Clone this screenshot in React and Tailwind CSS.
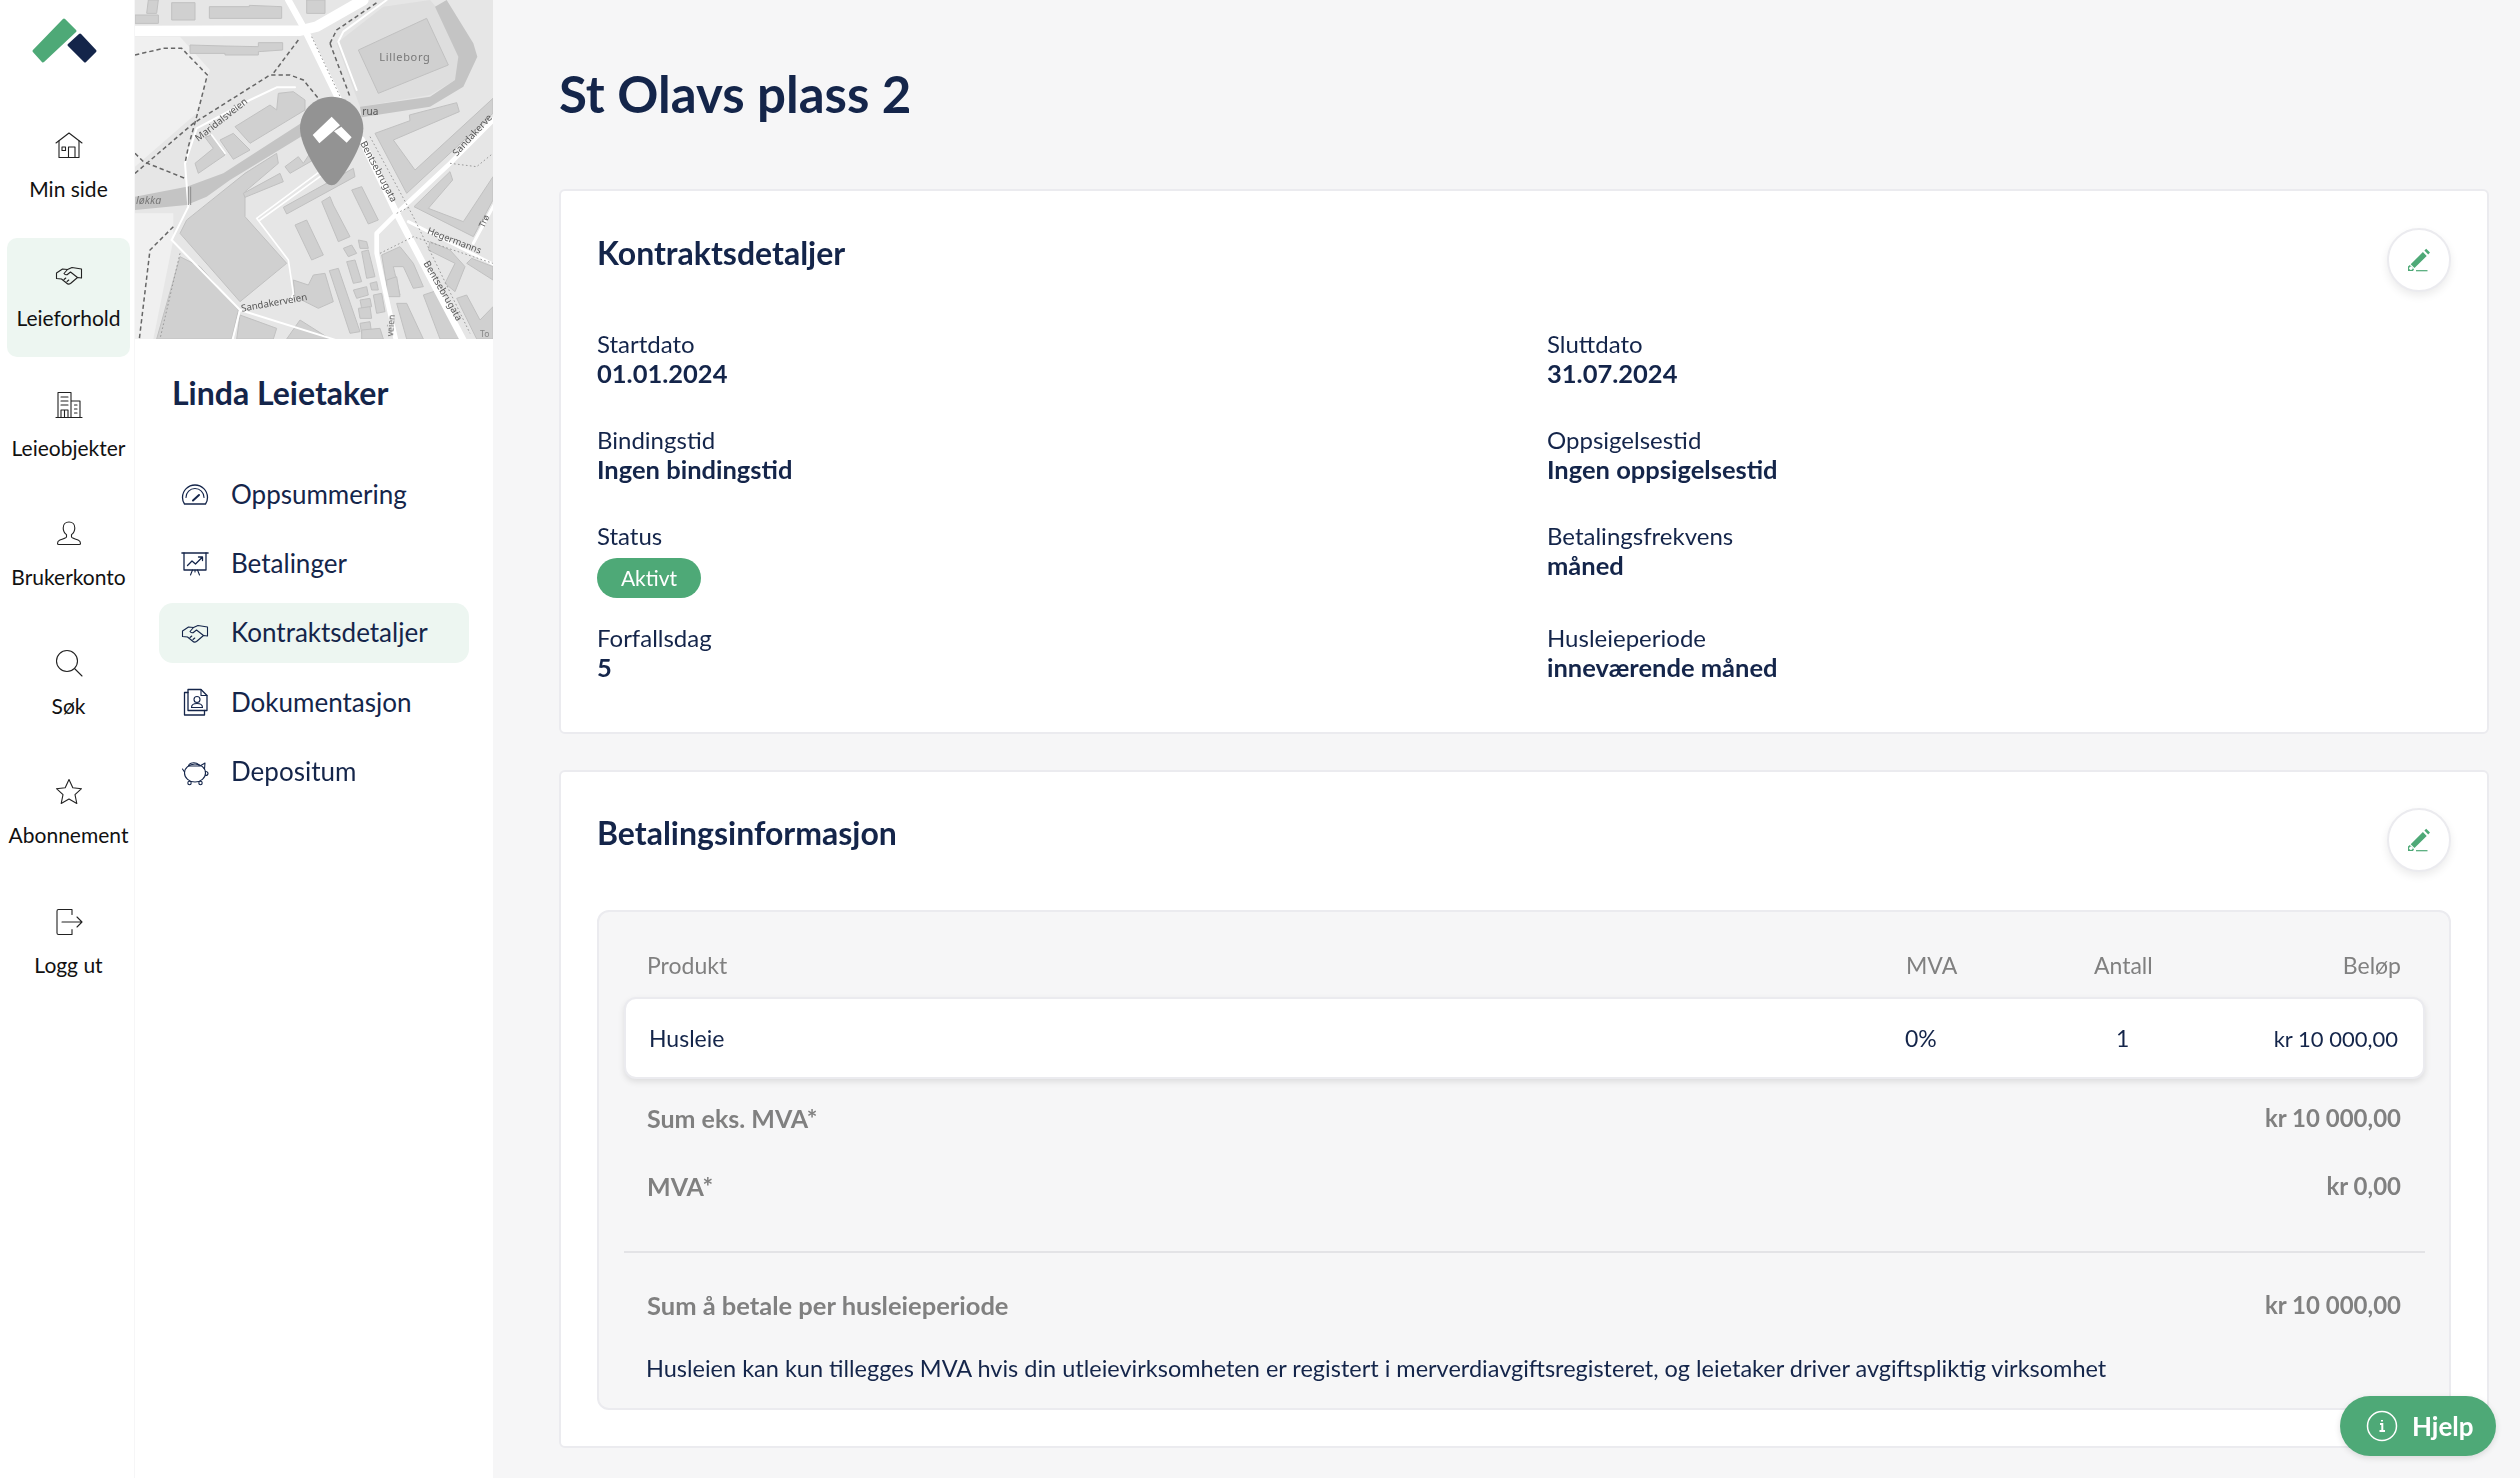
import React from "react";

const line = { fill: "none", stroke: "currentColor", strokeWidth: 1.1, strokeLinecap: "round", strokeLinejoin: "round" };

const Ico = ({ children, size = 28, className = "" }) => (
  <svg width={size} height={size} viewBox="0 0 28 28" className={className} {...line}>
    {children}
  </svg>
);

const HomeIcon = () => (
  <Ico>
    <path d="M1 11 14 1 27 11" />
    <path d="M4 9v16.500h20V9" />
    <rect x="7" y="15" width="3.500" height="3.500" />
    <path d="M13.500 25.500V15h6.500v10.500" />
  </Ico>
);
const HandshakeIcon = ({ size = 28 }) => (
  <Ico size={size}>
    <path d="M1.5 12 7.5 8l5 .5L17 6.500l9.500 1.500v9l-4-.5-7 6c-1.500 1-3 .5-4-.5l-5-4-5-.5z" />
    <path d="M12.5 8.500 9 12.500c1 1.500 3 1.500 4 .5l2.500-2 7 5.500" />
    <path d="M9 18.500l1.800-1.500M12 20.500l1.800-1.500" />
  </Ico>
);
const BuildingIcon = () => (
  <Ico>
    <path d="M1 26.5h26" />
    <path d="M3 26.5V1.5h13v25M16 10h9v16.5" />
    <path d="M6 6h7M6 10h7M6 14h7M19.5 14h2.5M19.5 18h2.5M19.5 22h2.5" />
    <path d="M6 26.5V19h7v7.5M9.5 19v7.5" />
  </Ico>
);
const UserIcon = () => (
  <Ico>
    <path d="M14 2c3.6 0 5.8 2.6 5.8 6 0 3-1.8 5.5-3.3 6.6v2.4c0 1 4 2 7 3.2 1.6.7 2 2 2 3.3 0 .8-.5 1-1.3 1H3.800c-.8 0-1.300-.2-1.300-1 0-1.300.4-2.600 2-3.300 3-1.200 7-2.200 7-3.200v-2.400C10 13.500 8.200 11 8.200 8c0-3.400 2.200-6 5.800-6z" />
  </Ico>
);
const SearchIcon = () => (
  <Ico>
    <circle cx="12" cy="12" r="10.500" />
    <path d="m19.500 19.500 7.500 7.500" />
  </Ico>
);
const StarIcon = () => (
  <Ico>
    <path d="m14 1.500 3.800 8.200 8.700 1-6.500 6 1.800 8.800-7.800-4.500-7.800 4.500 1.800-8.800-6.500-6 8.700-1z" />
  </Ico>
);
const LogoutIcon = () => (
  <Ico>
    <path d="M17 6.500V1.500H3.500C2.500 1.500 2 2 2 3v22c0 1 .5 1.500 1.500 1.500H17v-5" />
    <path d="M7 14h20M22 9l5 5-5 5" />
  </Ico>
);

const GaugeIcon = () => (
  <Ico>
    <path strokeWidth="1.300" d="M3.500 24C2 22 1.500 19.500 1.500 17.500a12.500 12.500 0 0 1 25 0c0 2-.5 4.500-2 6.500z" />
    <path d="M5 17.500a9 9 0 0 1 18 0" />
    <path strokeWidth="2" d="M12 20.500 18 15" />
  </Ico>
);
const ChartIcon = () => (
  <Ico>
    <path strokeWidth="1.600" d="M1 4h26" />
    <path strokeWidth="1.300" d="M3 4v17h22V4" />
    <path d="M9.500 26l2-5M18.500 26l-2-5M14 21v2" />
    <path strokeWidth="1.300" d="m6.500 16.500 4.500-4.500 3.500 3 6.500-6.500M17.500 8H21.500v3.500" />
  </Ico>
);
const DocIcon = () => (
  <Ico>
    <path strokeWidth="1.300" d="M7 22.500V1.500h13l6 6v15z" />
    <path d="M20 1.500v6h6" />
    <path strokeWidth="1.300" d="M7 4.500H3.500v22.500h20V22.500" />
    <circle cx="16" cy="11.500" r="3" />
    <path d="M10.500 19.500c0-3 2-4 5.500-4s5.500 1 5.500 4z" />
  </Ico>
);
const PiggyIcon = () => (
  <Ico>
    <ellipse cx="14" cy="15" rx="10.500" ry="9" />
    <path d="M7.500 8c1-4 9-4.500 11 0zM19 8l5-3-.5 6" />
    <path d="M1.500 11 3.500 14M24.500 13.500c1.500 0 2.500 1 2.500 2s-1 2-2.500 2" />
    <circle cx="8.500" cy="25" r="1.700" />
    <circle cx="19.500" cy="25" r="1.700" />
  </Ico>
);

const PencilIcon = () => (
  <svg width="24" height="24" viewBox="0 0 24 24">
    <path fill="#4ea977" d="M19.200.800 23 4.600 21.200 6.400 17.400 2.600zM15.900 4.100 19.700 7.900 7.500 20 3.700 16.200z" />
    <path fill="#4ea977" d="M2.800 17 7 21.200 6 23H1v-4.500z" />
    <circle cx="3.900" cy="20.200" r="1.700" fill="#fff" />
    <path stroke="#4ea977" strokeWidth="1.200" d="M9 22.700h11.500" />
  </svg>
);

const railItems = [
  ["Min side", HomeIcon],
  ["Leieforhold", HandshakeIcon, true],
  ["Leieobjekter", BuildingIcon],
  ["Brukerkonto", UserIcon],
  ["Søk", SearchIcon],
  ["Abonnement", StarIcon],
  ["Logg ut", LogoutIcon],
];

const subItems = [
  ["Oppsummering", GaugeIcon],
  ["Betalinger", ChartIcon],
  ["Kontraktsdetaljer", HandshakeIcon, true],
  ["Dokumentasjon", DocIcon],
  ["Depositum", PiggyIcon],
];

const buildings = [
  "125,8 195,8 195,60 125,60",
  "238,20 358,20 358,16 455,20 455,55 238,55",
  "530,0 585,0 585,40 530,40",
  "55,0 85,0 80,40 50,40",
  "15,45 85,45 85,70 15,70",
  "180,135 285,138 385,140 385,128 458,128 458,150 385,155 385,165 285,165 285,160 180,160",
  "685,150 890,55 955,195 745,280",
  "315,380 420,315 440,330 445,280 490,275 525,300 525,330 360,430",
  "270,420 310,400 360,450 310,478",
  "195,490 250,445 225,412 245,405 285,465 205,520",
  "150,700 170,660 345,520 440,460 445,490 345,575 345,650 470,790 330,905",
  "340,580 450,520 460,545 345,592",
  "460,622 670,505 675,530 470,642",
  "465,500 505,470 520,490 540,460 550,480 480,520",
  "495,675 530,660 580,765 545,780",
  "575,605 600,590 610,615 660,710 625,725",
  "665,570 695,560 745,660 715,672",
  "490,840 535,855 550,825 585,820 610,905 565,925 495,890",
  "598,812 625,805 690,995 660,1000",
  "735,400 840,362 838,345 980,308 988,335 790,420 855,510 1089,295 1089,340 830,580",
  "852,620 960,515 968,540 895,625 1000,665 1089,530 1089,600 1030,710",
  "755,765 810,740 850,790 880,860 850,865 820,800 790,800 810,885 775,885",
  "880,885 925,870 1000,1017 930,1017",
  "900,725 960,750 1005,800 975,875 945,850 975,790 895,750",
  "1010,790 1025,775 1089,800 1089,840",
  "980,895 1010,885 1050,960 1089,920 1089,1017 1040,1017",
  "80,1017 150,770 210,800 325,930 305,1017",
  "330,945 440,985 430,1017 320,1017",
  "470,1017 510,960 600,1017",
  "640,745 665,735 680,760 655,770",
  "650,785 675,780 695,845 670,850",
  "695,755 715,750 735,830 710,835",
  "670,870 710,860 715,885 680,895",
  "690,900 720,895 725,920 695,925",
  "685,925 720,920 725,955 690,955",
  "730,885 755,880 765,935 740,940",
  "720,850 740,845 745,870 725,870",
  "685,720 710,725 715,745 690,745",
  "690,970 720,965 725,1000 695,1000",
  "695,990 750,985 760,1017 695,1017",
  "770,840 800,830 810,890 770,890",
  "800,910 830,910 880,1017 830,1017",
];

const MapView = () => (
  <svg viewBox="15 0 1074 1017" preserveAspectRatio="none" className="block w-full h-[339px]">
    <rect x="15" y="0" width="1074" height="1017" fill="#e6e6e6" />
    <polygon points="15,110 150,110 240,210 200,340 15,500" fill="#f0f0f0" />
    <polygon points="15,640 130,640 130,720 70,1017 15,1017" fill="#f0f0f0" />
    <polygon points="620,130 760,20 900,0 1020,140 975,240 900,285 690,320" fill="#dedede" />
    <g filter="url(#soft)">
      <g fill="#c4c4c4">
        <polygon points="15,590 170,560 280,520 515,368 530,400 300,540 230,590 170,615 15,630" />
        <polygon points="690,320 900,290 975,240 985,170 915,20 950,0 1030,130 1042,170 1000,260 900,320 695,352" />
      </g>
      <g fill="#d0d0d0" stroke="#c0c0c0" strokeWidth="3">
        {buildings.map((pts) => (
          <polygon key={pts} points={pts} />
        ))}
      </g>
      <g fill="none" stroke="#fff" strokeLinecap="round" strokeLinejoin="round">
        <path strokeWidth="32" d="M0 93 510 92 560 80 700 0" />
        <path strokeWidth="20" d="M475 0 525 90 625 295M695 420 800 640 1005 1030" />
        <path strokeWidth="14" d="M800 1030 740 760 740 700 800 640 960 490 1100 350" />
        <path strokeWidth="6" d="M770 0 640 95 625 125 680 270" />
        <path strokeWidth="6" d="M125 720 175 620 165 490 200 385 360 300 440 262 495 262" />
        <path strokeWidth="6" d="M125 720 330 930 650 1030M330 930 305 1030" />
        <path strokeWidth="5" d="M380 655 565 518M390 660 570 530M380 655 475 780 490 880 480 905" />
        <path strokeWidth="9" d="M835 665 1095 795M1030 730 1095 610" />
        <path strokeWidth="5" d="M245 405 285 460" />
      </g>
      <g fill="none" stroke="#666" strokeWidth="4.500" strokeDasharray="13 9">
        <path d="M15 165 100 145 155 145 232 225 200 350 175 440 165 490" />
        <path d="M15 520 190 370 420 225 480 225 520 240 565 295" />
        <path d="M15 460 40 485 165 535" />
        <path d="M130 680 60 750 28 1017" />
        <path d="M505 120 430 220" />
        <path d="M600 130 660 290M600 130 620 90 745 5" />
      </g>
      <path fill="none" stroke="#8c8c8c" strokeWidth="3" d="M175 560v55M182 560v55" />
      <g fill="none" stroke="#9a9a9a" strokeWidth="3" strokeDasharray="5 7">
        <path d="M545 110 640 310M720 410 850 650 1020 1000" />
        <path d="M750 760 850 710 1089 790M150 760 90 1017M960 490 1040 500 1089 460" />
        <path d="M800 640 840 620" />
      </g>
      <g fill="#555" style={{ fontFamily: "'Noto Sans', sans-serif" }}>
        <text x="748" y="183" fontSize="33" letterSpacing="2" fill="#777">Lilleborg</text>
        <text x="697" y="345" fontSize="30">rua</text>
        <text x="18" y="612" fontSize="32" fontStyle="italic" fill="#777">løkka</text>
        <text x="205" y="425" fontSize="29" transform="rotate(-38 205 425)">Maridalsveien</text>
        <text x="690" y="430" fontSize="29" transform="rotate(62 690 430)">Bentsebrugata</text>
        <text x="880" y="790" fontSize="29" transform="rotate(60 880 790)">Bentsebrugata</text>
        <text x="980" y="470" fontSize="29" transform="rotate(-47 980 470)">Sandakerve</text>
        <text x="890" y="700" fontSize="28" transform="rotate(21 890 700)">Hegermanns</text>
        <text x="335" y="935" fontSize="29" transform="rotate(-10 335 935)">Sandakerveien</text>
        <text x="790" y="1010" fontSize="26" transform="rotate(-85 790 1010)">veien</text>
        <text x="1050" y="1010" fontSize="26" fill="#888">To</text>
        <text x="1062" y="685" fontSize="26" transform="rotate(-65 1062 685)">Trø</text>
      </g>
    </g>
    <path fill="#939393" d="M605 290C660 290 700 335 700 385 700 440 640 530 620 550 612 558 598 558 590 550 570 530 510 440 510 385 510 335 550 290 605 290Z" />
    <path fill="#fff" d="M548 405 605 350 630 376 568 430ZM634 380 665 412 650 428 612 394Z" />
    <defs>
      <filter id="soft">
        <feGaussianBlur stdDeviation="1" />
      </filter>
    </defs>
  </svg>
);

const Field = ({ label, children }) => (
  <div className="-mt-[1px] text-[24px] leading-[28px] text-[#14254a]">
    <div className="mb-[1px]">{label}</div>
    {children}
  </div>
);

const Value = ({ children }) => <div className="font-bold text-[25.500px]">{children}</div>;

const EditButton = () => (
  <button className="w-[64px] h-[64px] shrink-0 rounded-full bg-white border-2 border-[#ebebef] shadow-[0_4px_8px_rgba(0,0,0,0.08)] flex items-center justify-center">
    <PencilIcon />
  </button>
);

const Heading = ({ children }) => (
  <h2 className="mt-[7px] text-[32px] leading-[36px] font-bold text-[#14254a]">{children}</h2>
);

export default function App() {
  return (
    <div
      className="relative flex w-[2520px] h-[1478px] overflow-hidden bg-[#f6f6f7] text-[#14254a]"
      style={{ fontFamily: "Lato, 'Noto Sans', sans-serif" }}
    >
      {/* main rail */}
      <aside className="w-[134px] shrink-0 bg-white">
        <svg width="134" height="109" viewBox="0 0 134 109" className="block">
          <g strokeLinejoin="round" strokeWidth="3">
            <polygon points="64,20 75,31 43,61 34,51" fill="#4ea977" stroke="#4ea977" />
            <polygon points="80,35 95,51 85,61 69,45" fill="#14254a" stroke="#14254a" />
          </g>
        </svg>
        <nav className="flex flex-col gap-[10.300px] pl-[7px] pr-[4px]">
          {railItems.map(([label, Icon, active]) => (
            <div
              key={label}
              className={`h-[119px] rounded-[10px] flex flex-col items-center pt-[23px] text-[21px] leading-[28px] text-[#111] ${active ? "bg-[#edf6f1]" : ""}`}
            >
              <div className="h-[28px] text-[#222]">
                <Icon />
              </div>
              <div className="mt-[15px] whitespace-nowrap">{label}</div>
            </div>
          ))}
        </nav>
      </aside>

      {/* sub nav */}
      <aside className="w-[358px] shrink-0 ml-[1px] bg-white">
        <MapView />
        <div className="pl-[37px] mt-[36px] text-[32px] leading-[36px] font-bold">Linda Leietaker</div>
        <nav className="mt-[53px] flex flex-col pl-[24px] pr-[24px]">
          {subItems.map(([label, Icon, active]) => (
            <div
              key={label}
              className={`h-[60px] mb-[9.400px] flex items-center pl-[22px] rounded-[14px] text-[26px] ${active ? "bg-[#edf6f1]" : ""}`}
            >
              <Icon />
              <span className="ml-[22px]">{label}</span>
            </div>
          ))}
        </nav>
      </aside>

      {/* content */}
      <main className="flex-1 pl-[66px] pr-[31px]">
        <div className="h-[189px] flex items-center">
          <h1 className="text-[51px] font-bold">St Olavs plass 2</h1>
        </div>

        <section className="bg-white border-2 border-[#ebebef] rounded-[6px] pl-[36px] pr-[36px] pt-[37px] pb-[51px]">
          <div className="flex justify-between items-start h-[64px]">
            <Heading>Kontraktsdetaljer</Heading>
            <EditButton />
          </div>
          <div className="mt-[39px] grid grid-cols-[950px_1fr] grid-rows-[96px_96px_102px_56px]">
            <Field label="Startdato"><Value>01.01.2024</Value></Field>
            <Field label="Sluttdato"><Value>31.07.2024</Value></Field>
            <Field label="Bindingstid"><Value>Ingen bindingstid</Value></Field>
            <Field label="Oppsigelsestid"><Value>Ingen oppsigelsestid</Value></Field>
            <Field label="Status">
              <div className="mt-[8px] w-[104px] h-[40px] rounded-full bg-[#4ea977] text-white text-[21px] flex items-center justify-center">
                Aktivt
              </div>
            </Field>
            <Field label="Betalingsfrekvens"><Value>måned</Value></Field>
            <Field label="Forfallsdag"><Value>5</Value></Field>
            <Field label="Husleieperiode"><Value>inneværende måned</Value></Field>
          </div>
        </section>

        <section className="mt-[36px] bg-white border-2 border-[#ebebef] rounded-[6px] pl-[36px] pr-[36px] pt-[36px] pb-[36px]">
          <div className="flex justify-between items-start h-[64px]">
            <Heading>Betalingsinformasjon</Heading>
            <EditButton />
          </div>
          <div className="mt-[38px] bg-[#f6f6f7] border-2 border-[#ebebef] rounded-[12px] pl-[25px] pr-[24px] pt-[39px] pb-[26px]">
            <div className="flex pl-[23px] pr-[24px] text-[23px] leading-[28px] text-[#808080]">
              <div className="w-[1259px]">Produkt</div>
              <div className="w-[188px]">MVA</div>
              <div>Antall</div>
              <div className="flex-1 text-right">Beløp</div>
            </div>
            <div className="mt-[18px] h-[82px] flex items-center pl-[23px] pr-[25px] bg-white rounded-[12px] border-2 border-[#ebebef] shadow-[0_3px_6px_rgba(0,0,0,0.1)] text-[23px]">
              <div className="w-[1256px]">Husleie</div>
              <div className="w-[211px]">0%</div>
              <div>1</div>
              <div className="flex-1 text-right text-[22px]">kr 10 000,00</div>
            </div>
            <div className="text-[24px] leading-[28px] font-bold text-[#808080] pl-[23px] pr-[24px]">
              <div className="mt-[25px] flex justify-between"><span className="text-[25px]">Sum eks. MVA*</span><span>kr 10 000,00</span></div>
              <div className="mt-[40px] flex justify-between"><span className="text-[25px]">MVA*</span><span>kr 0,00</span></div>
            </div>
            <div className="mt-[51px] h-[2px] bg-[#e3e3e6]" />
            <div className="mt-[38px] pl-[23px] pr-[24px] flex justify-between text-[24px] leading-[28px] font-bold text-[#808080]">
              <span className="text-[25.500px]">Sum å betale per husleieperiode</span><span>kr 10 000,00</span>
            </div>
            <div className="mt-[35px] pl-[22px] text-[23.500px] leading-[28px]">
              Husleien kan kun tillegges MVA hvis din utleievirksomheten er registert i merverdiavgiftsregisteret, og leietaker driver avgiftspliktig virksomhet
            </div>
          </div>
        </section>
      </main>

      {/* help button floats over the page */}
      <button className="absolute left-[2340px] top-[1396px] w-[156px] h-[60px] rounded-full bg-[#4ea977] text-white flex items-center pl-[26px] gap-[14px] text-[26px] font-bold shadow-[0_2px_6px_rgba(0,0,0,0.12)]">
        <svg width="32" height="32" viewBox="0 0 32 32" fill="none" stroke="#fff" strokeWidth="1.500">
          <circle cx="16" cy="16" r="14.500" />
          <path strokeWidth="2" d="M14 14h2.300v7M13.500 21h5.500M16 10v1.500" />
        </svg>
        Hjelp
      </button>
    </div>
  );
}
